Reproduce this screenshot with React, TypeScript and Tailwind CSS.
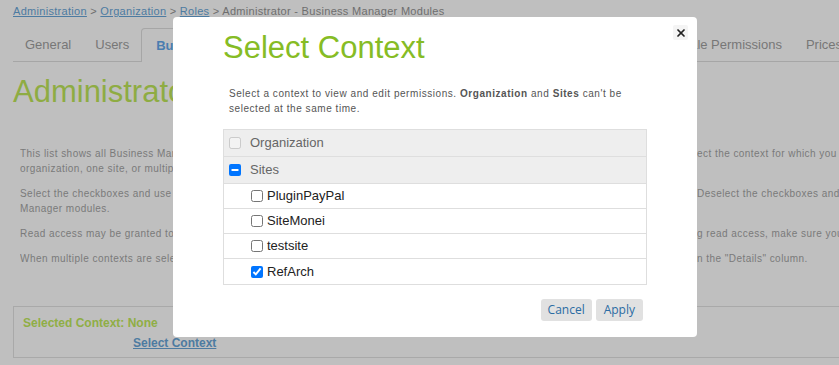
import React from 'react';
import { X } from 'lucide-react';

const tabs = [
  { label: 'General', w: '' },
  { label: 'Users', w: '' },
  { label: 'Business Manager Modules', w: 'w-[190px]', active: true },
  { label: 'Functional Permissions', w: 'w-[326px]' },
  { label: 'Locale Permissions', w: '' },
  { label: 'Prices', w: '' },
];

const Line: React.FC<{ left: string; right?: string }> = ({ left, right }) => (
  <div className="flex h-[15px] leading-[15px] whitespace-nowrap">
    <span className="w-[677px] shrink-0 overflow-hidden">{left}</span>
    {right && <span className="shrink-0">{right}</span>}
  </div>
);

const sites = [
  { name: 'PluginPayPal', checked: false },
  { name: 'SiteMonei', checked: false },
  { name: 'testsite', checked: false },
  { name: 'RefArch', checked: true },
];

export default function App() {
  return (
    <div className="relative w-[839px] h-[365px] overflow-hidden bg-[#bfbfbf] font-['Liberation_Sans',Arial,sans-serif]">
      {/* page behind the dialog */}
      <div className="w-[1000px]">
        <div className="pl-[13px] pt-[4px] h-[28px] text-[11px] tracking-[0.3px] leading-[14px] text-[#6e6e6e] whitespace-nowrap">
          <a className="text-[#4d7ba1] underline">Administration</a> &gt;{' '}
          <a className="text-[#4d7ba1] underline">Organization</a> &gt;{' '}
          <a className="text-[#4d7ba1] underline">Roles</a> &gt; Administrator - Business Manager Modules
        </div>

        <div className="ml-[13px] flex h-[34px] border-b border-[#a6a6a6] text-[13px] text-[#777]">
          {tabs.map((t) => (
            <div
              key={t.label}
              className={`${t.w} shrink-0 px-3 flex items-center whitespace-nowrap ${
                t.active
                  ? 'border border-b-0 border-[#a6a6a6] rounded-tl-[4px] rounded-tr-[4px] -mb-px bg-[#bfbfbf] font-bold text-[#4a7db0] pl-[14px]'
                  : ''
              }`}
            >
              {t.label}
            </div>
          ))}
        </div>

        <h1 className="ml-[13px] mt-[12px] text-[31px] leading-[36px] text-[#8eac43]">Administrator - Business Manager Modules</h1>

        <div className="ml-[20px] mt-[36px] text-[10px] tracking-[0.45px] text-[#7a7a7a] space-y-[10px]">
          <div>
            <Line
              left="This list shows all Business Manager modules and the permissions of this role. To begin, se"
              right="ect the context for which you want to view or edit the permissions."
            />
            <Line left="organization, one site, or multiple sites." />
          </div>
          <div>
            <Line
              left="Select the checkboxes and use the Update button to grant access to the selected modules."
              right=" Deselect the checkboxes and use the Update button to revoke access to Business"
            />
            <Line left="Manager modules." />
          </div>
          <Line
            left="Read access may be granted to some modules only. Before grantin"
            right="g read access, make sure you understand the consequences."
          />
          <Line
            left="When multiple contexts are selected, the permissions that differ between the contexts are shown i"
            right={'n the "Details" column.'}
          />
        </div>

        <div className="ml-[13px] mt-[40px] w-[900px] border border-[#a9a9a9] pt-[8px] pb-[6px] pl-[9px] text-[12px] leading-[16px] font-bold">
          <div className="text-[#8fae45]">Selected Context: None</div>
          <div className="mt-[4px] pl-[110px]">
            <a className="text-[#4d7ba1] underline">Select Context</a>
          </div>
        </div>
      </div>

      {/* dialog */}
      <div className="absolute left-[173px] top-[17px] w-[524px] h-[320px] bg-white rounded-[4px] px-[50px] pt-[13px]">
        <button className="absolute top-[8px] right-[9px] w-[15px] h-[15px] flex items-center justify-center bg-[#f4f4f4] rounded-[2px]">
          <X size={12} strokeWidth={3.5} color="#222" />
        </button>

        <h2 className="text-[31px] leading-[36px] text-[#86bc25]">Select Context</h2>

        <p className="mt-[20px] pl-[6px] text-[10px] tracking-[0.55px] leading-[15px] text-[#555] whitespace-nowrap">
          Select a context to view and edit permissions. <b>Organization</b> and <b>Sites</b> can't be
          <br />
          selected at the same time.
        </p>

        <div className="mt-[13px] border border-[#dedede]">
          <div className="h-[27px] bg-[#eeeeee] border-b border-[#dedede] flex items-center pl-[5px] text-[13px] text-[#666]">
            <input type="checkbox" disabled className="m-0 w-[12px] h-[12px]" />
            <span className="ml-[9px]">Organization</span>
          </div>
          <div className="h-[27px] bg-[#eeeeee] border-b border-[#dedede] flex items-center pl-[5px] text-[13px] text-[#666]">
            <input
              type="checkbox"
              className="m-0 w-[12px] h-[12px]"
              ref={(el) => {
                if (el) el.indeterminate = true;
              }}
            />
            <span className="ml-[9px]">Sites</span>
          </div>
          {sites.map((s, i) => (
            <div
              key={s.name}
              className={`h-[25px] flex items-center pl-[27px] text-[13px] text-[#222] ${
                i < sites.length - 1 ? 'border-b border-[#dedede]' : ''
              }`}
            >
              <input type="checkbox" defaultChecked={s.checked} className="m-0 w-[12px] h-[12px]" />
              <span className="ml-[4px]">{s.name}</span>
            </div>
          ))}
        </div>

        <div className="mt-[14px] flex justify-end gap-[4px] pr-[4px] font-['Open_Sans',sans-serif] text-[12px] text-[#2b6ca3]">
          <button className="h-[22px] px-[7px] bg-[#e1e1e1] rounded-[3px]">Cancel</button>
          <button className="h-[22px] px-[8px] bg-[#e1e1e1] rounded-[3px]">Apply</button>
        </div>
      </div>
    </div>
  );
}
